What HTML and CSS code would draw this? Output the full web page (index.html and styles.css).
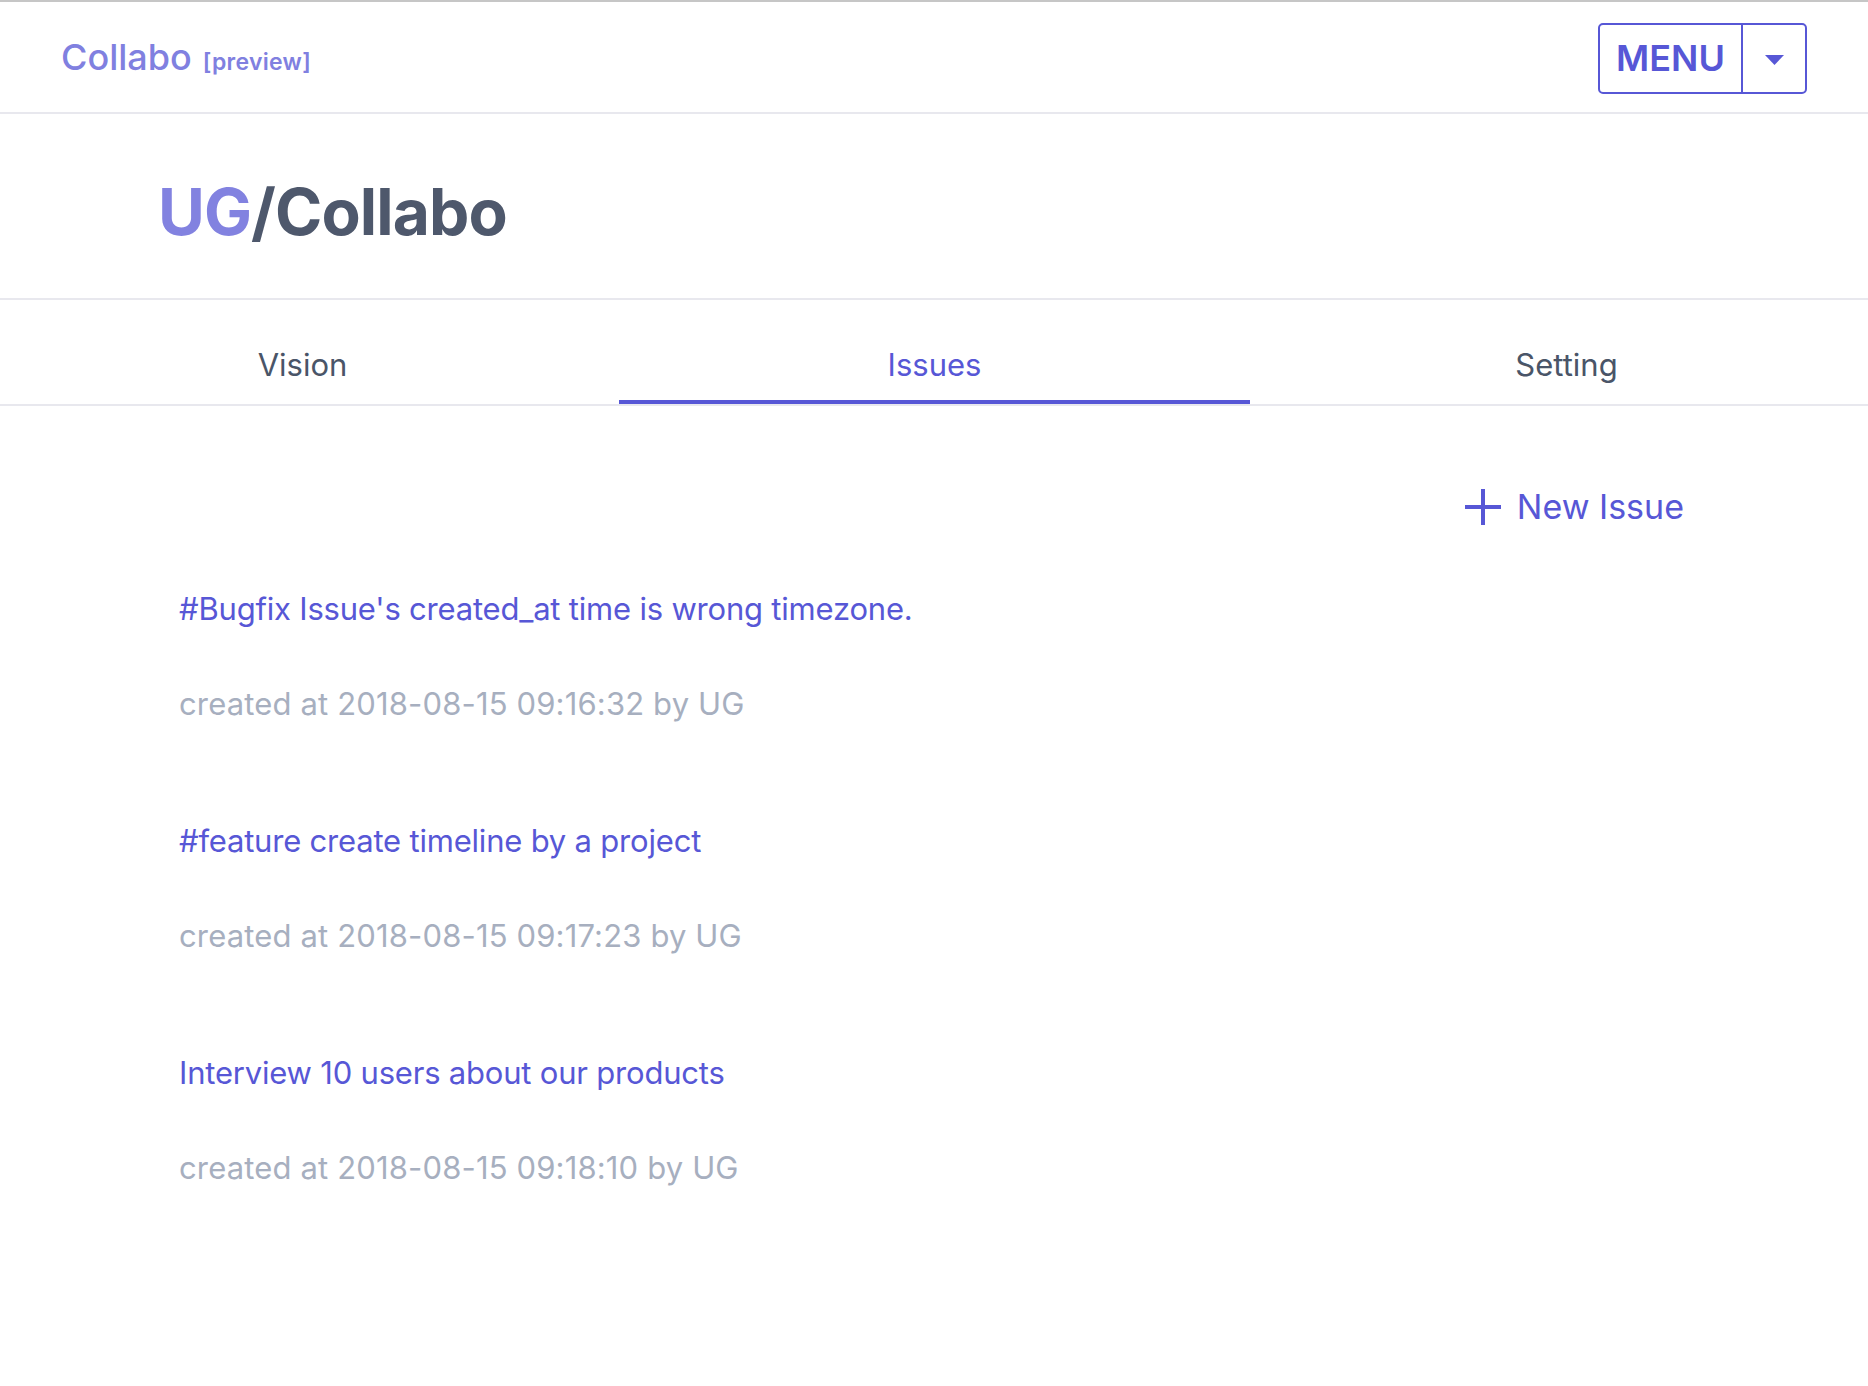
FILE: index.html
```html
<!DOCTYPE html>
<html lang="en">
<head>
<meta charset="utf-8">
<title>Collabo</title>
<link rel="stylesheet" href="styles.css">
</head>
<body>
<header class="topbar">
  <div class="brand">
    <span class="brand-name">Collabo</span>
    <span class="brand-tag">[preview]</span>
  </div>
  <div class="menu">
    <span class="menu-label">MENU</span>
    <span class="menu-caret"><svg width="19" height="10" viewBox="0 0 19 10"><path d="M0 0 L19 0 L9.5 10 Z" fill="currentColor"/></svg></span>
  </div>
</header>

<section class="project">
  <h1 class="project-title"><span class="owner">UG</span>/Collabo</h1>
</section>

<nav class="tabs">
  <div class="tab">Vision</div>
  <div class="tab active">Issues</div>
  <div class="tab">Setting</div>
</nav>

<main class="content">
  <div class="actions">
    <a class="new-issue">
      <svg class="plus" width="38" height="38" viewBox="0 0 38 38"><path d="M19 1 V37 M1 19 H37" stroke="currentColor" stroke-width="4" fill="none"/></svg>
      <span>New Issue</span>
    </a>
  </div>
  <ul class="issues">
    <li class="issue">
      <a class="issue-title">#Bugfix Issue's created_at time is wrong timezone.</a>
      <div class="issue-meta">created at 2018-08-15 09:16:32 by UG</div>
    </li>
    <li class="issue">
      <a class="issue-title">#feature create timeline by a project</a>
      <div class="issue-meta">created at 2018-08-15 09:17:23 by UG</div>
    </li>
    <li class="issue">
      <a class="issue-title">Interview 10 users about our products</a>
      <div class="issue-meta">created at 2018-08-15 09:18:10 by UG</div>
    </li>
  </ul>
</main>
</body>
</html>
```

FILE: styles.css
```css
* { box-sizing: border-box; }

html, body {
  margin: 0;
  padding: 0;
  background: #ffffff;
  font-family: Inter, "Noto Sans", "Liberation Sans", sans-serif;
  color: #4a5568;
}

body {
  border-top: 2px solid #c6c6c6;
  overflow-x: hidden;
}

.topbar {
  height: 112px;
  display: flex;
  align-items: center;
  justify-content: space-between;
  padding: 0 61px;
  border-bottom: 2px solid #e8e8ee;
}

.brand {
  display: flex;
  align-items: baseline;
  gap: 11px;
  color: #8080e0;
}

.brand-name {
  font-size: 36px;
  font-weight: 500;
}

.brand-tag {
  font-size: 23px;
  font-weight: 600;
  letter-spacing: 0.3px;
}

.menu {
  display: flex;
  height: 71px;
  border: 2px solid #5757d6;
  border-radius: 5px;
  color: #5757d6;
  margin-top: 2px;
}

.menu-label {
  display: flex;
  align-items: center;
  padding: 0 18px 0 18px;
  width: 143px;
  justify-content: center;
  font-size: 36px;
  font-weight: 600;
  border-right: 2px solid #5757d6;
}

.menu-caret {
  display: flex;
  align-items: center;
  justify-content: center;
  width: 62px;
  padding-top: 4px;
}

.project {
  height: 186px;
  padding: 12px 0 0 158px;
  display: flex;
  align-items: center;
  border-bottom: 2px solid #e8e8ee;
}

.project-title {
  margin: 0;
  font-size: 64px;
  line-height: 1;
  font-weight: 700;
  color: #4e586c;
  letter-spacing: -0.9px;
}

.owner {
  color: #8282e0;
}

.tabs {
  display: flex;
  justify-content: center;
  border-bottom: 2px solid #e8e8ee;
}

.tab {
  flex: 0 0 631px;
  height: 104px;
  padding-top: 29px;
  display: flex;
  justify-content: center;
  align-items: flex-start;
  font-size: 31px;
  line-height: 71px;
  color: #4a5568;
  border-bottom: 4px solid transparent;
  margin-left: 1px;
}

.tab.active {
  color: #5757d6;
  border-bottom-color: #5757d6;
}

.content {
  padding-top: 81px;
}

.actions {
  display: flex;
  justify-content: flex-end;
  padding-right: 184px;
}

.new-issue {
  display: flex;
  align-items: center;
  gap: 15px;
  color: #5757d6;
  font-size: 34px;
  line-height: 40px;
}

.issues {
  list-style: none;
  margin: 62px 0 0 0;
  padding: 0 0 0 179px;
}

.issue {
  margin-bottom: 97px;
}

.issue-title {
  display: block;
  font-size: 31px;
  line-height: 40px;
  color: #5757d6;
  letter-spacing: -0.2px;
}

.issue-meta {
  margin-top: 55px;
  font-size: 31px;
  line-height: 40px;
  color: #a7afbf;
  letter-spacing: 0.15px;
}
```
